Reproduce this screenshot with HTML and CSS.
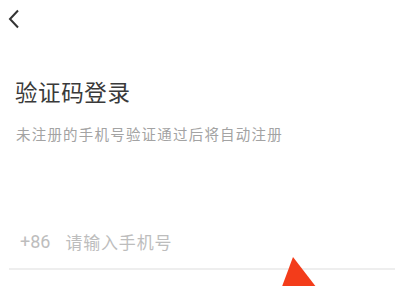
FILE: index.html
```html
<!DOCTYPE html>
<html lang="zh">
<head>
<meta charset="utf-8">
<link rel="stylesheet" href="styles.css">
</head>
<body>
<div class="page">
  <div class="nav">
    <svg class="back" width="12" height="20" viewBox="0 0 12 20"><path d="M10 1.5 L2 10 L10 18.5" fill="none" stroke="#333" stroke-width="2"/></svg>
  </div>
  <h1 class="title">验证码登录</h1>
  <p class="sub">未注册的手机号验证通过后将自动注册</p>
  <div class="phone">
    <span class="code">+86</span>
    <span class="ph">请输入手机号</span>
  </div>
  <div class="line"></div>
  <svg class="arrow" width="60" height="40" viewBox="0 0 60 40"><polygon points="13,0 0,35 40,35" fill="#f33c1a"/></svg>
</div>
</body>
</html>
```
FILE: styles.css
```css
html, body { margin: 0; padding: 0; background: #fff; }
.page {
  position: relative;
  width: 402px;
  height: 286px;
  overflow: hidden;
  font-family: "Noto Sans CJK SC", "Noto Sans", sans-serif;
}
.nav { height: 40px; padding: 9px 0 0 8px; box-sizing: border-box; }
.back { display: block; }
.title {
  margin: 38px 0 0 15px;
  font-size: 22.5px;
  line-height: 26px;
  font-weight: 400;
  color: #3a3a3a;
  letter-spacing: 0.6px;
}
.sub {
  margin: 20px 0 0 16px;
  font-size: 14.5px;
  line-height: 20px;
  color: #a3a3a3;
  letter-spacing: 1.2px;
}
.phone {
  margin: 84px 0 0 20px;
  display: flex;
  align-items: center;
  gap: 15px;
  height: 26px;
  color: #bdbdbd;
}
.code { font-family: "Roboto", sans-serif; font-size: 18px; }
.ph { font-size: 17px; letter-spacing: 0.8px; }
.line {
  margin: 14px 7px 0 9px;
  height: 2px;
  background: #eeeeee;
}
.arrow { position: absolute; left: 280px; top: 257px; }
```
